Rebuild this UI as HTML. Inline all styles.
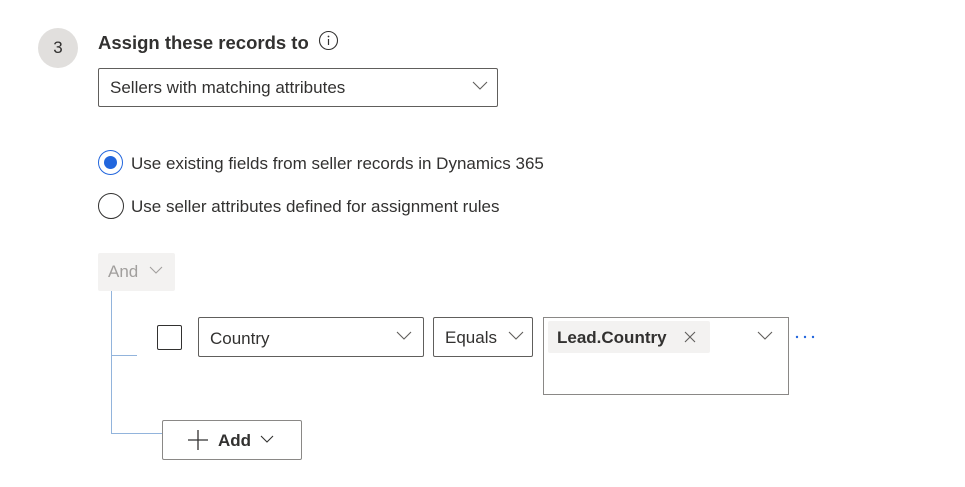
<!DOCTYPE html>
<html><head><style>
body{margin:0;width:965px;height:487px;background:#fff;font-family:"Liberation Sans",sans-serif;color:#323130;position:relative;overflow:hidden}
.a{position:absolute;box-sizing:border-box}
.box{border:1px solid #605e5c;border-radius:2px}
.t{font-size:17px;white-space:nowrap}
</style></head><body>
<div class="a" style="left:38px;top:28px;width:40px;height:40px;border-radius:50%;background:#e1dfdd;text-align:center;line-height:40px;font-size:17px">3</div>
<div class="a" style="left:98px;top:32px;font-size:18.5px;font-weight:bold;color:#323130;white-space:nowrap">Assign these records to</div>
<svg class="a" style="left:318px;top:30px" width="21" height="21" viewBox="0 0 21 21"><circle cx="10.5" cy="10.5" r="9" fill="none" stroke="#323130" stroke-width="1.1"/><circle cx="10.5" cy="6.5" r="0.9" fill="#323130"/><path d="M10.5 9v6" stroke="#323130" stroke-width="1.2"/></svg>
<div class="a box" style="left:98px;top:68px;width:400px;height:39px"></div>
<div class="a t" style="left:110px;top:78px">Sellers with matching attributes</div>
<svg class="a" style="left:472px;top:81px" width="16" height="10"><path d="M1 1l7 7 7-7" fill="none" stroke="#605e5c" stroke-width="1.1"/></svg>

<div class="a" style="left:98px;top:150px;width:25px;height:25px;border-radius:50%;border:1.5px solid #2266dd"></div>
<div class="a" style="left:104px;top:156px;width:13px;height:13px;border-radius:50%;background:#2266dd"></div>
<div class="a t" style="left:131px;top:154px">Use existing fields from seller records in Dynamics 365</div>
<div class="a" style="left:98px;top:193px;width:26px;height:26px;border-radius:50%;border:1.3px solid #323130"></div>
<div class="a t" style="left:131px;top:197px">Use seller attributes defined for assignment rules</div>

<div class="a" style="left:98px;top:253px;width:77px;height:38px;background:#f3f2f1;border-radius:2px"></div>
<div class="a t" style="left:108px;top:262px;color:#a19f9d">And</div>
<svg class="a" style="left:149px;top:266px" width="14" height="9"><path d="M1 1l6 6 6-6" fill="none" stroke="#a19f9d" stroke-width="1.1"/></svg>
<div class="a" style="left:111px;top:291px;width:1px;height:143px;background:#92b4dc"></div>
<div class="a" style="left:111px;top:355px;width:26px;height:1px;background:#92b4dc"></div>
<div class="a" style="left:111px;top:433px;width:51px;height:1px;background:#92b4dc"></div>

<div class="a" style="left:157px;top:325px;width:25px;height:25px;border:1.3px solid #323130;border-radius:2px"></div>
<div class="a box" style="left:198px;top:317px;width:226px;height:40px"></div>
<div class="a t" style="left:210px;top:329px">Country</div>
<svg class="a" style="left:396px;top:331px" width="16" height="10"><path d="M1 1l7 7 7-7" fill="none" stroke="#605e5c" stroke-width="1.1"/></svg>
<div class="a box" style="left:433px;top:317px;width:100px;height:40px"></div>
<div class="a t" style="left:445px;top:328px">Equals</div>
<svg class="a" style="left:508px;top:331px" width="16" height="10"><path d="M1 1l7 7 7-7" fill="none" stroke="#605e5c" stroke-width="1.1"/></svg>
<div class="a" style="left:543px;top:317px;width:246px;height:78px;border:1px solid #8a8886"></div>
<div class="a" style="left:548px;top:321px;width:162px;height:32px;background:#f3f2f1;border-radius:2px"></div>
<div class="a t" style="left:557px;top:328px;font-weight:bold">Lead.Country</div>
<svg class="a" style="left:684px;top:331px" width="12" height="12"><path d="M1 1l10 10M11 1L1 11" stroke="#605e5c" stroke-width="1.1"/></svg>
<svg class="a" style="left:757px;top:331px" width="16" height="10"><path d="M1 1l7 7 7-7" fill="none" stroke="#605e5c" stroke-width="1.1"/></svg>
<svg class="a" style="left:795px;top:335px" width="22" height="4"><circle cx="2" cy="2" r="1.2" fill="#2266dd"/><circle cx="10" cy="2" r="1.2" fill="#2266dd"/><circle cx="18" cy="2" r="1.2" fill="#2266dd"/></svg>

<div class="a" style="left:162px;top:420px;width:140px;height:40px;border:1px solid #8a8886;border-radius:2px"></div>
<svg class="a" style="left:187px;top:429px" width="22" height="22"><path d="M11 1v20M1 11h20" stroke="#323130" stroke-width="1.3"/></svg>
<div class="a t" style="left:218px;top:431px;font-weight:bold">Add</div>
<svg class="a" style="left:260px;top:435px" width="14" height="9"><path d="M1 1l6 6 6-6" fill="none" stroke="#323130" stroke-width="1.1"/></svg>
</body></html>
